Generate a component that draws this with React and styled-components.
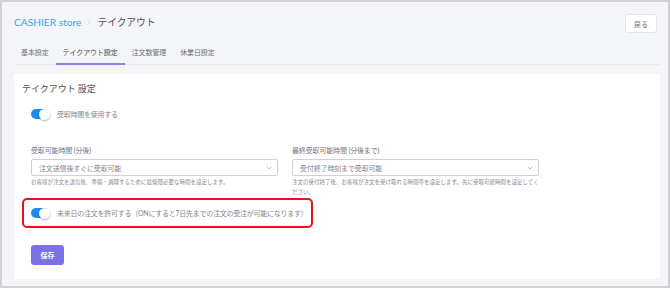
import React from "react";
import styled, { createGlobalStyle } from "styled-components";
import { ChevronRight, ChevronDown } from "lucide-react";

const GlobalStyle = createGlobalStyle`
  html, body { margin: 0; padding: 0; }
  body {
    font-family: Lato, "Noto Sans CJK JP", sans-serif;
    background: #ffffff;
  }
  * { box-sizing: border-box; }
`;

const Frame = styled.div`
  width: 670px;
  height: 288px;
  border: 2px solid #d2d2d4;
  background: #f4f5f9;
  padding: 0 8px 0 12px;
  overflow: hidden;
`;

const Header = styled.header`
  display: flex;
  justify-content: space-between;
  align-items: flex-start;
  padding: 12px 3px 0 0;
`;

const Crumbs = styled.div`
  display: flex;
  align-items: center;
  gap: 3px;
  font-size: 10.2px;
  line-height: 16px;
`;

const Store = styled.span`
  color: #3f9fe8;
`;

const Current = styled.span`
  color: #4e4e55;
  font-family: "Noto Sans CJK JP", sans-serif;
  font-size: 9.8px;
  letter-spacing: -0.1px;
`;

const BackButton = styled.button`
  width: 32px;
  height: 19px;
  border: 1px solid #e3e4ec;
  border-radius: 3px;
  background: #fff;
  color: #6f6f78;
  font-family: "Noto Sans CJK JP", sans-serif;
  font-size: 7px;
  padding: 0;
`;

const TabBar = styled.nav`
  display: flex;
  margin-top: 9px;
  border-bottom: 1px solid #e7e8f0;
`;

const Tab = styled.div`
  padding: 5px 7px 6px;
  font-family: "Noto Sans CJK JP", sans-serif;
  font-size: 7px;
  line-height: 10px;
  letter-spacing: -0.1px;
  color: ${(p) => (p.$active ? "#4a4a52" : "#6e6e76")};
  border-bottom: 2px solid ${(p) => (p.$active ? "#8b80f0" : "transparent")};
  margin-bottom: -1px;
`;

const Card = styled.section`
  margin-top: 9px;
  background: #fff;
  padding: 8px 8px 14px;
  font-family: "Noto Sans CJK JP", sans-serif;
`;

const CardTitle = styled.h2`
  margin: 0;
  font-size: 9px;
  line-height: 14px;
  font-weight: 400;
  color: #4e4e55;
`;

const ToggleRow = styled.div`
  display: flex;
  align-items: center;
  gap: 8px;
  height: 10px;
  margin-top: ${(p) => p.$top || 0}px;
  padding-left: ${(p) => p.$indent || 0}px;
`;

const Track = styled.span`
  position: relative;
  width: 18px;
  height: 10px;
  border-radius: 5px;
  background: #1d8cee;
  flex-shrink: 0;

  &::after {
    content: "";
    position: absolute;
    right: -1px;
    top: -0.5px;
    width: 11px;
    height: 11px;
    border-radius: 50%;
    background: #fff;
    box-shadow: 0 1px 2px rgba(0, 0, 0, 0.3);
  }
`;

const ToggleLabel = styled.span`
  font-size: 7px;
  letter-spacing: -0.25px;
  color: #85858f;
  white-space: nowrap;
  font-family: Lato, "Noto Sans CJK JP", sans-serif;
`;

const Fields = styled.div`
  display: grid;
  grid-template-columns: 247px 247px;
  column-gap: 14px;
  margin-top: 26px;
  padding-left: 9px;
`;

const Field = styled.div`
  display: flex;
  flex-direction: column;
`;

const FieldLabel = styled.label`
  font-size: 7px;
  line-height: 10px;
  letter-spacing: -0.15px;
  color: #75757e;
  font-family: Lato, "Noto Sans CJK JP", sans-serif;
`;

const Select = styled.div`
  margin-top: 4px;
  height: 17px;
  border: 1px solid #cfd0dc;
  border-radius: 2px;
  display: flex;
  align-items: center;
  justify-content: space-between;
  padding: 0 4px 0 7px;
  font-size: 7px;
  letter-spacing: -0.15px;
  color: #85858f;
`;

const Help = styled.p`
  margin: 1px 0 0;
  width: 250px;
  font-size: 5.5px;
  line-height: 10px;
  color: #8a8a93;
`;

const Highlight = styled.div`
  width: 291px;
  margin-top: 1px;
  border: 2px solid #e8101c;
  border-radius: 5px;
  padding: 8px 7px;
`;

const SaveButton = styled.button`
  display: block;
  margin: 17px 0 0 9px;
  width: 33px;
  height: 20px;
  border: none;
  border-radius: 3px;
  background: #7a71e4;
  color: #fff;
  font-family: "Noto Sans CJK JP", sans-serif;
  font-size: 7px;
  font-weight: 700;
  padding: 0;
`;

const tabs = ["基本設定", "テイクアウト設定", "注文数管理", "休業日設定"];

export default function App() {
  return (
    <>
      <GlobalStyle />
      <Frame>
        <Header>
          <Crumbs>
            <Store>CASHIER store</Store>
            <ChevronRight size={10} strokeWidth={1.1} color="#c0c0c6" />
            <Current>テイクアウト</Current>
          </Crumbs>
          <BackButton>戻る</BackButton>
        </Header>

        <TabBar>
          {tabs.map((t, i) => (
            <Tab key={t} $active={i === 1}>
              {t}
            </Tab>
          ))}
        </TabBar>

        <Card>
          <CardTitle>テイクアウト 設定</CardTitle>

          <ToggleRow $top={13} $indent={9}>
            <Track />
            <ToggleLabel>受取時間を使用する</ToggleLabel>
          </ToggleRow>

          <Fields>
            <Field>
              <FieldLabel>受取可能時間 (分後)</FieldLabel>
              <Select>
                注文送信後すぐに受取可能
                <ChevronDown size={8} strokeWidth={1.5} color="#8a8a93" />
              </Select>
              <Help>お客様が注文を送信後、準備・調理するために最低限必要な時間を設定します。</Help>
            </Field>
            <Field>
              <FieldLabel>最終受取可能時間 (分後まで)</FieldLabel>
              <Select>
                受付終了時刻まで受取可能
                <ChevronDown size={8} strokeWidth={1.5} color="#8a8a93" />
              </Select>
              <Help>
                注文の受付終了後、お客様が注文を受け取れる時間帯を設定します。先に受取可能時間を設定してください。
              </Help>
            </Field>
          </Fields>

          <Highlight>
            <ToggleRow>
              <Track />
              <ToggleLabel>
                未来日の注文を許可する（ONにすると7日先までの注文の受注が可能になります）
              </ToggleLabel>
            </ToggleRow>
          </Highlight>

          <SaveButton>保存</SaveButton>
        </Card>
      </Frame>
    </>
  );
}
